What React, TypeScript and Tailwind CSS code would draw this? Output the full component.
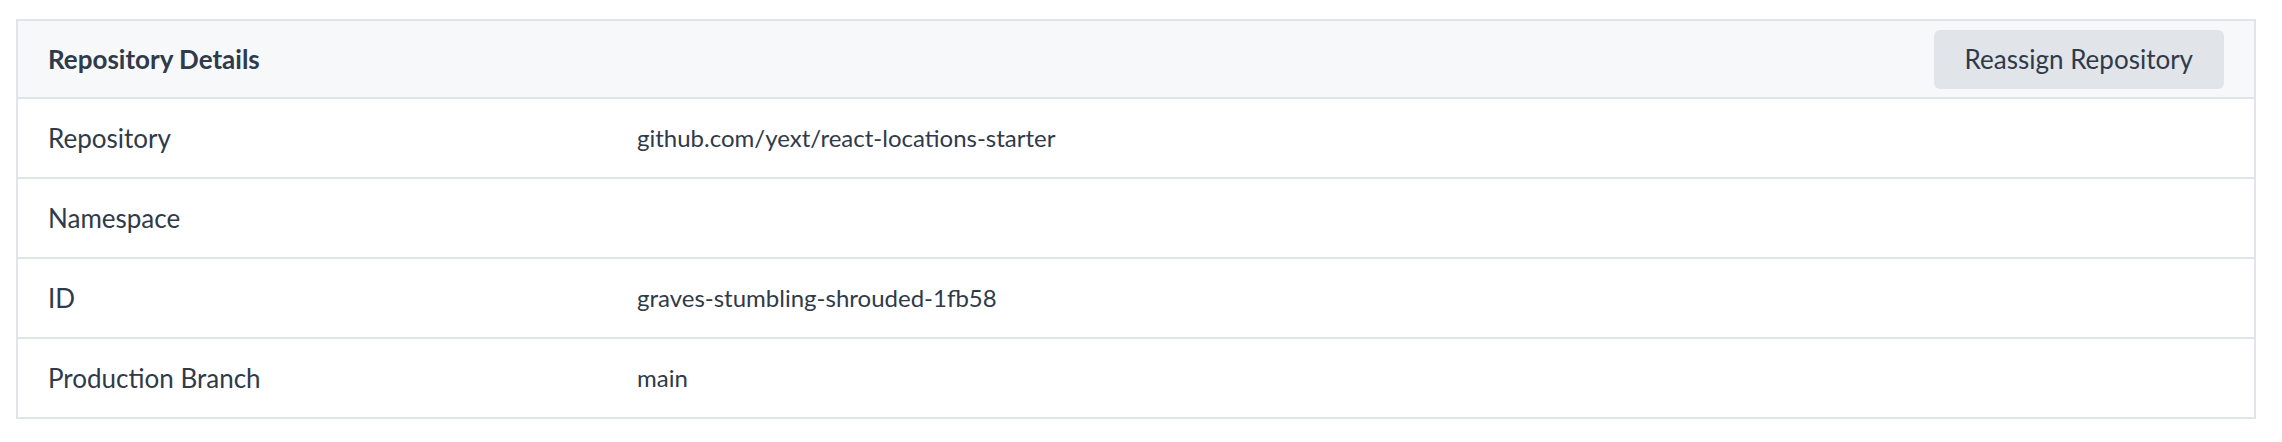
import React from "react";

interface DetailRow {
  label: string;
  value: string;
}

const rows: DetailRow[] = [
  { label: "Repository", value: "github.com/yext/react-locations-starter" },
  { label: "Namespace", value: "" },
  { label: "ID", value: "graves-stumbling-shrouded-1fb58" },
  { label: "Production Branch", value: "main" },
];

export default function App() {
  return (
    <div className="min-h-screen bg-white pl-4 pt-[19px] font-['Lato',sans-serif] text-[#2f3a4a]">
      <div className="w-[2240px] border-2 border-[#e1e5ea]">
        <div className="flex h-[76px] items-center justify-between bg-[#f7f8fa] pl-[30px] pr-[30px]">
          <h2 className="text-[26px] font-bold">Repository Details</h2>
          <button
            type="button"
            className="h-[59px] rounded-md bg-[#e1e4e8] px-[31px] text-[26px] text-[#2f3a4a]"
          >
            Reassign Repository
          </button>
        </div>
        {rows.map((row) => (
          <div key={row.label} className="flex h-[80px] items-center border-t-2 border-[#e1e5ea]">
            <div className="w-[619px] pl-[30px] text-[26px]">{row.label}</div>
            <div className="text-[24px]">{row.value}</div>
          </div>
        ))}
      </div>
    </div>
  );
}
